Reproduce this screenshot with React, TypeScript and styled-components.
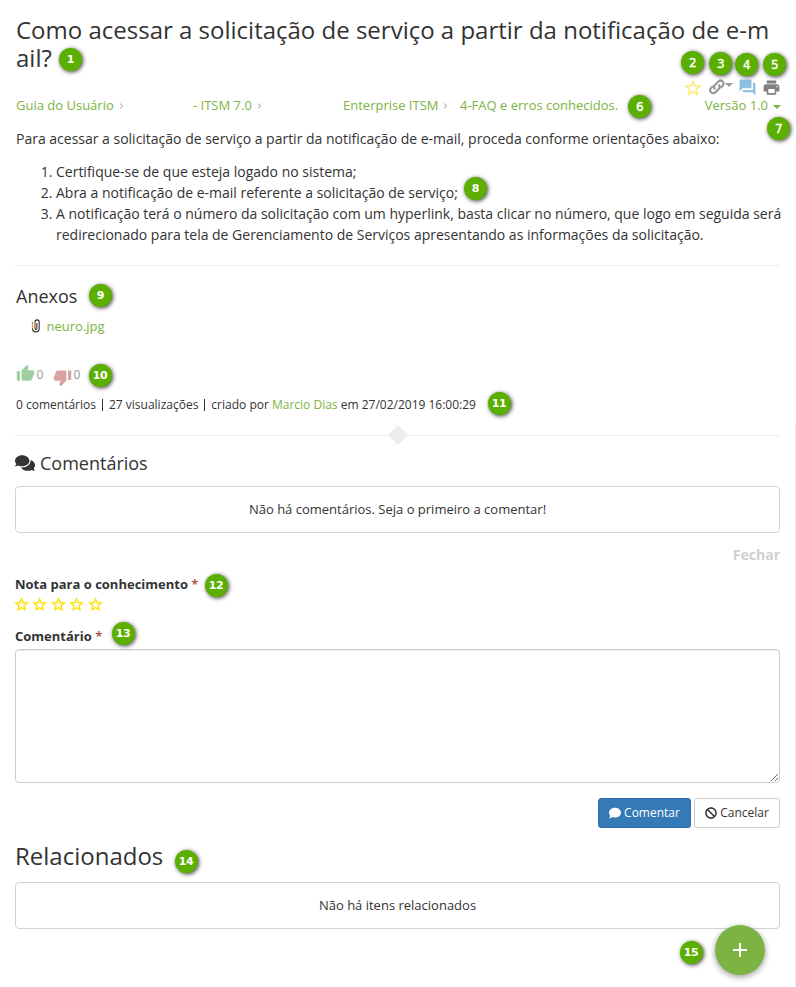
import React from "react";
import styled, { createGlobalStyle } from "styled-components";
import { MdQuestionAnswer, MdPrint, MdThumbUp, MdThumbDown } from "react-icons/md";
import { FaComments, FaComment, FaBan } from "react-icons/fa";

const GlobalStyle = createGlobalStyle`
  * { box-sizing: border-box; }
  body {
    margin: 0;
    background: #fff;
    color: #333;
    font-family: "Open Sans", "Noto Sans", sans-serif;
    font-size: 13px;
  }
  #root { overflow: hidden; }
  svg { display: block; flex: none; }
`;

const Page = styled.main`
  position: relative;
  display: flex;
  flex-direction: column;
  width: 796px;
  height: 987px;
  padding: 16px 16px 0 15px;
  overflow: hidden;
`;

const Title = styled.h1`
  height: 62px;
  margin: 0 0 0 1px;
  font-size: 24px;
  font-weight: 400;
  line-height: 28px;
  white-space: nowrap;
`;

const Toolbar = styled.div`
  display: flex;
  justify-content: flex-end;
  align-items: flex-start;
  height: 18px;
`;

const Tool = styled.span<{ $color: string; $gap: number; $drop?: number }>`
  display: flex;
  color: ${(p) => p.$color};
  margin-right: ${(p) => p.$gap}px;
  padding-top: ${(p) => p.$drop ?? 0}px;
`;

const Caret = styled.span<{ $size: number }>`
  width: 0;
  height: 0;
  border: ${(p) => p.$size}px solid transparent;
  border-top-color: currentColor;
  border-bottom: 0;
`;

const CrumbRow = styled.nav`
  display: flex;
  align-items: center;
  height: 18px;
  margin: 0 -1px 0 1px;
  color: #7cb342;
  white-space: nowrap;
`;

const Crumb = styled.span<{ $width: number }>`
  display: flex;
  align-items: center;
  gap: 5px;
  width: ${(p) => p.$width}px;
`;

const Version = styled.span`
  display: flex;
  align-items: center;
  gap: 5px;
  margin-left: auto;

  ${Caret} { margin-top: 3px; }
`;

const Article = styled.section`
  margin: 1px 0 0 1px;
  font-size: 14px;
  line-height: 21px;
  white-space: nowrap;

  p { margin: 13px 0 12px; }
  ol { margin: 0; padding-left: 40px; }
`;

const Line = styled.span`
  display: block;
  letter-spacing: -0.006px;
`;

const Rule = styled.hr`
  width: 100%;
  height: 1px;
  margin: 20px 0 0;
  border: 0;
  background: #eee;
`;

const Heading = styled.h2<{ $top: number; $left?: number }>`
  display: flex;
  align-items: center;
  gap: 5px;
  height: 24px;
  margin: ${(p) => p.$top}px 0 0 ${(p) => p.$left ?? 0}px;
  font-size: 18px;
  font-weight: 400;
  line-height: 24px;
`;

const Attachment = styled.div`
  display: flex;
  align-items: center;
  gap: 6px;
  height: 20px;
  margin: 8px 0 0 15.5px;
  color: #7cb342;
`;

const Votes = styled.div`
  display: flex;
  height: 22px;
  margin: 29px 0 0 0.5px;
  color: #999;
  font-size: 12px;
  line-height: 20px;
`;

const Vote = styled.span<{ $color: string; $drop: number; $width: number }>`
  display: flex;
  gap: 2px;
  width: ${(p) => p.$width}px;

  svg { color: ${(p) => p.$color}; margin-top: ${(p) => p.$drop}px; }
`;

const Meta = styled.div`
  height: 18px;
  margin: 9px 0 0 1px;
  font-size: 12px;
  line-height: 18px;
  white-space: nowrap;

  a { color: #7cb342; }
  i { display: inline-block; width: 1px; height: 12px; margin: 0 6px; background: #333; vertical-align: -2px; }
`;

const Divider = styled.div`
  display: flex;
  align-items: center;
  height: 20px;
  margin-top: 11px;

  &::before, &::after { content: ""; flex: 1; height: 1px; background: #eee; }
`;

const Diamond = styled.span`
  width: 14px;
  height: 14px;
  margin: 0 -1px;
  background: #ececec;
  transform: rotate(45deg);
`;

const Panel = styled.div<{ $top: number }>`
  display: flex;
  align-items: center;
  justify-content: center;
  height: 47px;
  margin-top: ${(p) => p.$top}px;
  padding-bottom: 2px;
  border: 1px solid #d3d3d3;
  border-radius: 4px;
`;

const Close = styled.div`
  margin-top: 12px;
  height: 20px;
  font-size: 14px;
  font-weight: 700;
  line-height: 20px;
  text-align: right;
  color: #d0d0d0;
`;

const Label = styled.label<{ $top: number }>`
  height: 18px;
  margin-top: ${(p) => p.$top}px;
  font-weight: 700;
  line-height: 18px;

  em { color: #a94442; font-style: normal; font-weight: 600; }
`;

const Stars = styled.div`
  display: flex;
  gap: 1.4px;
  height: 18px;
  margin: 2px 0 0 -2px;
  padding-top: 0.5px;
  color: #ffe100;
`;

const CommentBox = styled.textarea`
  width: 765px;
  height: 134px;
  margin-top: 4px;
  border: 1px solid #ccc;
  border-radius: 4px;
  box-shadow: inset 0 1px 1px rgba(0, 0, 0, 0.075);
  resize: vertical;
  flex: none;
`;

const Actions = styled.div`
  display: flex;
  justify-content: flex-end;
  gap: 3px;
  margin-top: 15px;
`;

const Button = styled.button<{ $primary?: boolean }>`
  display: flex;
  align-items: center;
  justify-content: center;
  gap: 3px;
  width: ${(p) => (p.$primary ? 93 : 86)}px;
  height: 30px;
  padding: 0 0 1px;
  border: 1px solid ${(p) => (p.$primary ? "#2e6da4" : "#ccc")};
  border-radius: 3px;
  background: ${(p) => (p.$primary ? "#337ab7" : "#fff")};
  color: ${(p) => (p.$primary ? "#fff" : "#333")};
  font: 12px "Open Sans", sans-serif;
`;

const Related = styled.h2`
  height: 32px;
  margin: 12px 0 0;
  font-size: 24px;
  font-weight: 400;
  line-height: 32px;
`;

const EdgeLine = styled.div`
  position: absolute;
  left: 795px;
  top: 424px;
  bottom: 0;
  width: 1px;
  background: #eee;
`;

const Marker = styled.span<{ $x: number; $y: number; $bold: boolean }>`
  position: absolute;
  left: ${(p) => p.$x - 12}px;
  top: ${(p) => p.$y - 12}px;
  width: 23px;
  height: 23px;
  border-radius: 50%;
  background: #5aaf00;
  box-shadow: 1px 1px 4px rgba(0, 0, 0, 0.75);
  color: #fff;
  font-family: "DejaVu Sans", sans-serif;
  font-size: ${(p) => (p.$bold ? 11 : 12)}px;
  font-weight: ${(p) => (p.$bold ? 700 : 400)};
  line-height: ${(p) => (p.$bold ? 23 : 24)}px;
  letter-spacing: -0.4px;
  text-align: center;
  -webkit-text-stroke: ${(p) => (p.$bold ? 0 : 0.4)}px #fff;
`;

const AddButton = styled.button`
  position: absolute;
  left: 715px;
  top: 925px;
  display: flex;
  align-items: center;
  justify-content: center;
  width: 50px;
  height: 50px;
  padding: 0;
  border: 0;
  border-radius: 50%;
  background: #7cb342;
  box-shadow: 0 2px 6px rgba(0, 0, 0, 0.4);
`;

const MARKERS: [number, number][] = [
  [71, 60], [693, 63], [721, 64], [747, 65], [775, 65],
  [640, 107], [779, 129], [476, 189], [101, 296], [100.5, 375.5],
  [499.5, 404], [216.5, 586], [123.5, 634], [186.5, 862], [691.5, 952.5],
];

const StarIcon = ({ size }: { size: number }) => (
  <svg width={size} height={size} viewBox="0 0 24 24" fill="currentColor" stroke="currentColor" strokeWidth="0.4" strokeMiterlimit="10">
    <path
      fillRule="evenodd"
      d="M22 9.24l-7.19-.62L12 2 9.19 8.63 2 9.24l5.46 4.73L5.82 21 12 17.27 18.18 21l-1.63-7.03zM12 15.4l-3.76 2.27 1-4.28-3.32-2.88 4.38-.38L12 6.1l1.71 4.04 4.38.38-3.32 2.88 1 4.28z"
    />
  </svg>
);

const Chevron = () => (
  <svg width="5" height="7" viewBox="0 0 5 7" fill="none" stroke="#c4c4c4" strokeWidth="1.2">
    <path d="M1 1.5l2.5 2.5L1 6.5" />
  </svg>
);

const LinkIcon = () => (
  <svg width="16" height="16" viewBox="0 0 16 16" fill="none" stroke="#999" strokeWidth="2.2">
    <path d="M6.2 10.2C4.7 8.7 4.8 7 6.1 5.7l3-3c1.4-1.4 3.2-1.5 4.5-.2s1.2 3.1-.2 4.5l-1.7 1.7" />
    <path d="M9.5 5.6c1.5 1.5 1.4 3.2.1 4.5l-3 3c-1.4 1.4-3.2 1.5-4.5.2s-1.2-3.1.2-4.5l1.7-1.7" />
  </svg>
);

const ClipIcon = () => (
  <svg width="10" height="14" viewBox="0 0 10 14" fill="none" strokeWidth="1.1">
    <path d="M1.5 3v6.5a3.3 3.3 0 0 0 6.7 0V3a2.1 2.1 0 0 0-4.2 0v6.5a.9.9 0 0 0 1.9 0V4" stroke="#333" />
    <path d="M1.5 3.5v6M4 3.5v6" stroke="#e8a35a" />
  </svg>
);

export default function App() {
  return (
    <Page>
      <GlobalStyle />
      <Title>
        Como acessar a solicitação de serviço a partir da notificação de e-m
        <br />
        ail?
      </Title>
      <Toolbar>
        <Tool $color="#ffe97a" $gap={6}><StarIcon size={20} /></Tool>
        <Tool $color="#999" $gap={0} $drop={1}><LinkIcon /></Tool>
        <Tool $color="#999" $gap={5} $drop={5}><Caret $size={4} /></Tool>
        <Tool $color="#8fc1e0" $gap={5}><MdQuestionAnswer size={19} /></Tool>
        <Tool $color="#808080" $gap={-1}><MdPrint size={19} /></Tool>
      </Toolbar>
      <CrumbRow>
        <Crumb $width={177}>Guia do Usuário <Chevron /></Crumb>
        <Crumb $width={150}>- ITSM 7.0 <Chevron /></Crumb>
        <Crumb $width={117}>Enterprise ITSM <Chevron /></Crumb>
        <Crumb $width={160}>4-FAQ e erros conhecidos.</Crumb>
        <Version>Versão 1.0 <Caret $size={4} /></Version>
      </CrumbRow>
      <Article>
        <p>
          <Line>
            Para acessar a solicitação de serviço a partir da notificação de e-mail, proceda conforme orientações abaixo:
          </Line>
        </p>
        <ol>
          <li><Line>Certifique-se de que esteja logado no sistema;</Line></li>
          <li><Line>Abra a notificação de e-mail referente a solicitação de serviço;</Line></li>
          <li>
            <Line>
              A notificação terá o número da solicitação com um hyperlink, basta clicar no número, que logo em seguida será
            </Line>
            <Line>
              redirecionado para tela de Gerenciamento de Serviços apresentando as informações da solicitação.
            </Line>
          </li>
        </ol>
      </Article>
      <Rule />
      <Heading $top={18} $left={1}>Anexos</Heading>
      <Attachment><ClipIcon /> neuro.jpg</Attachment>
      <Votes>
        <Vote $color="#9fcf9f" $drop={-1} $width={37}><MdThumbUp size={19} />0</Vote>
        <Vote $color="#d9a3a3" $drop={3} $width={40}><MdThumbDown size={19} />0</Vote>
      </Votes>
      <Meta>
        0 comentários<i />27 visualizações<i />criado por <a>Marcio Dias</a> em 27/02/2019 16:00:29
      </Meta>
      <Divider><Diamond /></Divider>
      <Heading $top={6}><FaComments size={20} /> Comentários</Heading>
      <Panel $top={11}>Não há comentários. Seja o primeiro a comentar!</Panel>
      <Close>Fechar</Close>
      <Label $top={10}>Nota para o conhecimento <em>*</em></Label>
      <Stars>
        {[1, 2, 3, 4, 5].map((n) => <StarIcon key={n} size={17} />)}
      </Stars>
      <Label $top={14}>Comentário <em>*</em></Label>
      <CommentBox />
      <Actions>
        <Button $primary><FaComment size={12} /> Comentar</Button>
        <Button><FaBan size={12} /> Cancelar</Button>
      </Actions>
      <Related>Relacionados</Related>
      <Panel $top={10}>Não há itens relacionados</Panel>
      <EdgeLine />
      <AddButton>
        <svg width="16" height="16" viewBox="0 0 16 16" stroke="#fff" strokeWidth="2">
          <path d="M8 1v14M1 8h14" />
        </svg>
      </AddButton>
      {MARKERS.map(([x, y], i) => (
        <Marker key={i} $x={x} $y={y} $bold={i === 0 || i > 6}>{i + 1}</Marker>
      ))}
    </Page>
  );
}
